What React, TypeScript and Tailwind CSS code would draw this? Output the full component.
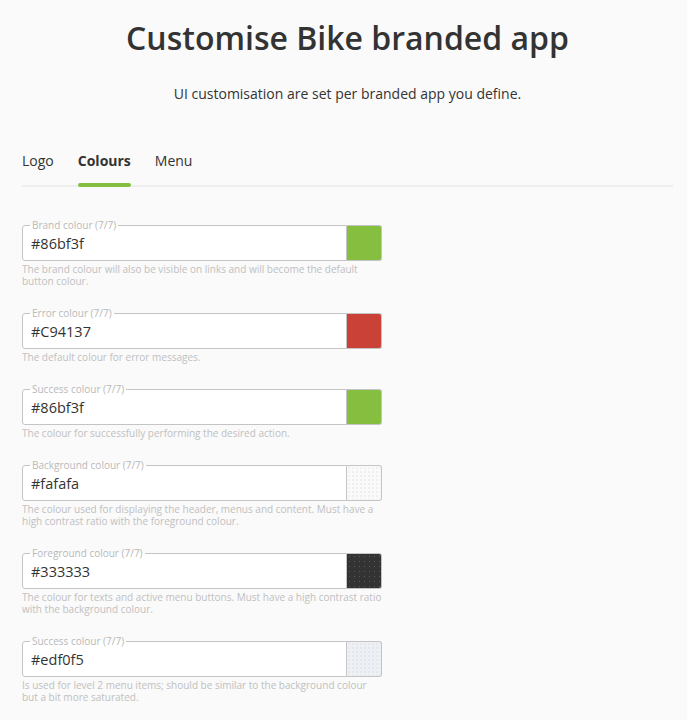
import React from "react";

type Field = {
  label: string;
  value: string;
  help: string;
  swatch: string;
};

const fields: Field[] = [
  {
    label: "Brand colour (7/7)",
    value: "#86bf3f",
    help: "The brand colour will also be visible on links and will become the default button colour.",
    swatch: "bg-[#86bf3f]",
  },
  {
    label: "Error colour (7/7)",
    value: "#C94137",
    help: "The default colour for error messages.",
    swatch: "bg-[#c94137]",
  },
  {
    label: "Success colour (7/7)",
    value: "#86bf3f",
    help: "The colour for successfully performing the desired action.",
    swatch: "bg-[#86bf3f]",
  },
  {
    label: "Background colour (7/7)",
    value: "#fafafa",
    help: "The colour used for displaying the header, menus and content. Must have a high contrast ratio with the foreground colour.",
    swatch:
      "bg-[#fafafa] bg-[radial-gradient(circle,#ececec_0.6px,transparent_1px)] bg-[length:4px_4px]",
  },
  {
    label: "Foreground colour (7/7)",
    value: "#333333",
    help: "The colour for texts and active menu buttons. Must have a high contrast ratio with the background colour.",
    swatch:
      "bg-[#333333] bg-[radial-gradient(circle,#5a5a5a_0.7px,transparent_1px)] bg-[length:5px_5px]",
  },
  {
    label: "Success colour (7/7)",
    value: "#edf0f5",
    help: "Is used for level 2 menu items; should be similar to the background colour but a bit more saturated.",
    swatch:
      "bg-[#edf0f5] bg-[radial-gradient(circle,#e2e4e8_0.6px,transparent_1px)] bg-[length:4px_4px]",
  },
];

function ColourField({ f }: { f: Field }) {
  return (
    <div className="mb-[20px] w-[360px]">
      <div className="flex items-end">
        <fieldset className="w-[325px] rounded-l-[3px] border border-[#c4c4c4] bg-white pl-[8px] pr-[8px] pt-[3px] pb-[6px]">
          <legend className="-ml-[1px] px-[2px] text-[10px] leading-[12px] text-[#b9b9b9]">
            {f.label}
          </legend>
          <div className="text-[14.5px] leading-[20px] text-[#333]">{f.value}</div>
        </fieldset>
        <div
          className={`h-[36px] w-[35px] rounded-r-[3px] border-y border-r border-[#c4c4c4] ${f.swatch}`}
        />
      </div>
      <p className="mt-[2px] text-[10px] leading-[12px] text-[#c0c0c0]">{f.help}</p>
    </div>
  );
}

export default function App() {
  return (
    <div
      className="min-h-[720px] bg-[#fafafa] text-[#333]"
      style={{ fontFamily: '"Open Sans", "Noto Sans", Arial, sans-serif' }}
    >
      <div className="ml-[22px] w-[651px] pt-[18px]">
        <h1 className="text-center text-[32px] font-semibold leading-[40px] text-[#333]">
          Customise Bike branded app
        </h1>
        <p className="mt-[26px] text-center text-[14px] leading-[20px] text-[#333]">
          UI customisation are set per branded app you define.
        </p>

        <div className="mt-[47px] flex gap-[24px] border-b-2 border-[#eeeeee] text-[14px] leading-[20px]">
          <div className="pb-[14px] text-[#333]">Logo</div>
          <div className="relative pb-[14px] font-bold text-[#333]">
            Colours
            <div className="absolute bottom-[-2px] left-0 right-0 h-[4px] rounded-full bg-[#86bf3f]" />
          </div>
          <div className="pb-[14px] text-[#333]">Menu</div>
        </div>

        <div className="mt-[32px]">
          {fields.map((f, i) => (
            <ColourField key={i} f={f} />
          ))}
        </div>
      </div>
    </div>
  );
}
